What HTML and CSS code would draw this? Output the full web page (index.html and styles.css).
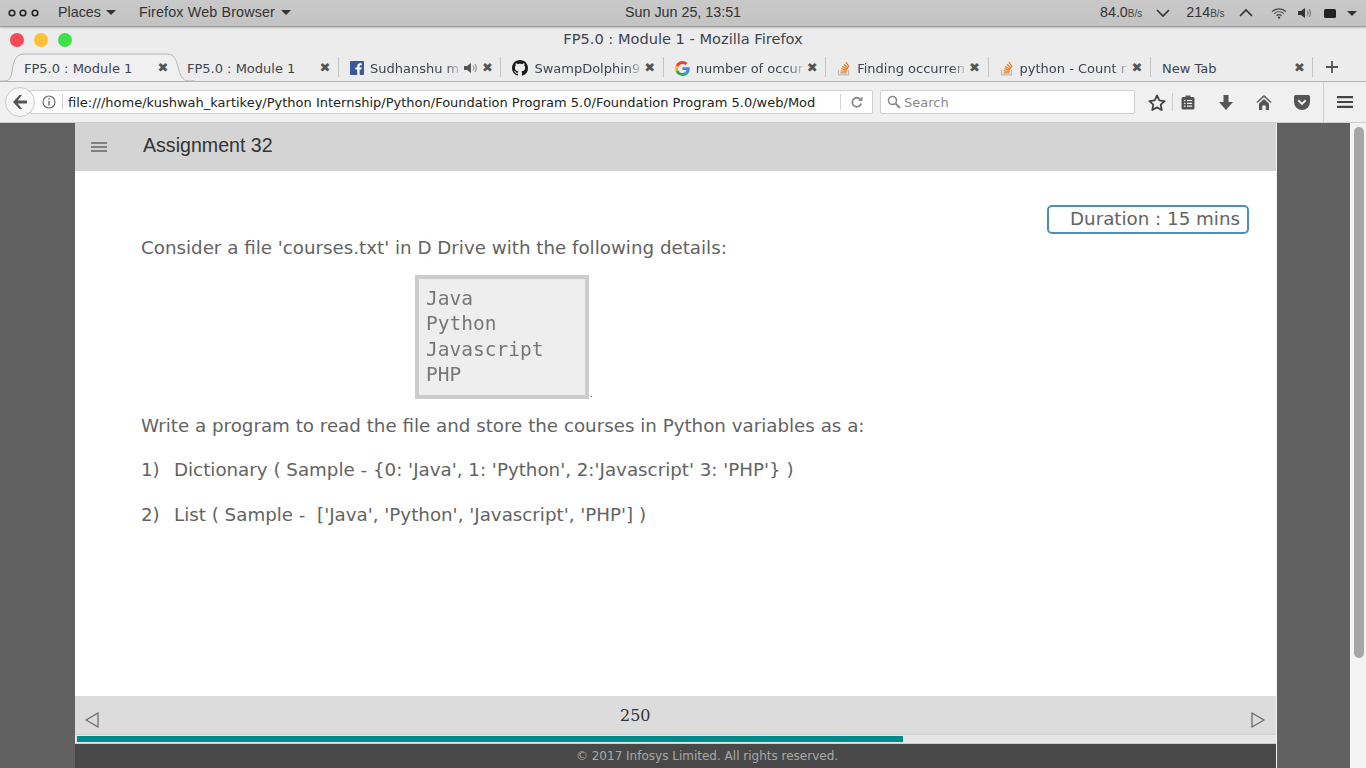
FILE: index.html
```html
<!DOCTYPE html>
<html lang="en">
<head>
    <meta charset="UTF-8">
    <title>FP5.0 : Module 1 - Mozilla Firefox</title>
    <link rel="stylesheet" href="styles.css">
</head>
<body>
    <div class="topbar">
        <div class="topbar-left">
            <svg class="dots" width="32" height="8" viewBox="0 0 32 8"><circle cx="4" cy="4" r="2.8"/><circle cx="15" cy="4" r="2.8"/><circle cx="27" cy="4" r="2.8"/></svg>
            <span class="menu-item places">Places <i class="caret"></i></span>
            <span class="menu-item browser">Firefox Web Browser <i class="caret"></i></span>
        </div>
        <div class="clock">Sun Jun 25, 13:51</div>
        <div class="topbar-right">
            <span class="speed">84.0<small>B/s</small></span>
            <svg class="tray-chev" width="16" height="10" viewBox="0 0 16 10"><path d="M2 2l6 6 6-6" fill="none" stroke="#333" stroke-width="1.6"/></svg>
            <span class="speed">214<small>B/s</small></span>
            <svg class="tray-chev" width="16" height="10" viewBox="0 0 16 10"><path d="M2 8l6-6 6 6" fill="none" stroke="#333" stroke-width="1.6"/></svg>
            <svg class="tray-wifi" width="16" height="12" viewBox="0 0 16 12"><path d="M1 4.500c4-3.600 10-3.600 14 0M3.200 6.600c2.800-2.500 6.800-2.500 9.600 0M5.400 8.700c1.500-1.300 3.700-1.300 5.200 0" fill="none" stroke="#444" stroke-width="1.200"/><circle cx="8" cy="10.600" r="1.200" fill="#444"/></svg>
            <svg class="tray-vol" width="13" height="12" viewBox="0 0 13 12"><path d="M0 4h3l4-3v10L3 8H0z" fill="#333"/><path d="M9 3.500c1.200 1.400 1.200 3.600 0 5M11 2c1.800 2.200 1.800 5.800 0 8" fill="none" stroke="#666"/></svg>
            <svg class="tray-batt" width="13" height="9" viewBox="0 0 13 9"><rect width="12" height="9" rx="1.500" fill="#222"/></svg>
            <i class="caret tray-caret"></i>
        </div>
    </div>

    <div class="titlebar">
        <div class="lights"><i class="light red"></i><i class="light yellow"></i><i class="light green"></i></div>
        <div class="window-title">FP5.0 : Module 1 - Mozilla Firefox</div>
    </div>

    <div class="tabstrip">
        <svg class="active-curve" width="196" height="29" viewBox="0 0 196 29"><path d="M0 28h4c5 0 7-3 8-9 1-9 3-18 12-18h143c7 0 9 5 11 13 2 8 4 14 11 14h6" fill="#f0f0f0" stroke="#b4b4b4"/></svg>
        <div class="tab tab-first"><span class="tab-label">FP5.0 : Module 1</span><b class="tab-close">✖</b></div>
        <div class="tab tab-second sep"><span class="tab-label">FP5.0 : Module 1</span><b class="tab-close">✖</b></div>
        <div class="tab sep">
            <svg class="fav" width="14" height="14" viewBox="0 0 14 14"><rect width="14" height="14" rx="1" fill="#3b5998"/><path d="M9.600 14V8.600h1.800l.3-2.100H9.600V5.200c0-.6.200-1 1-1h1.200V2.300c-.2 0-.9-.1-1.700-.1-1.700 0-2.800 1-2.800 2.900v1.400H5.400v2.100h1.900V14z" fill="#fff"/></svg>
            <span class="tab-label fade">Sudhanshu m</span>
            <svg class="tab-sound" width="13" height="12" viewBox="0 0 13 12"><path d="M0 4h3l4-3v10L3 8H0z" fill="#555"/><path d="M9 3.500c1.200 1.400 1.200 3.600 0 5M11 2c1.800 2.200 1.800 5.800 0 8" fill="none" stroke="#777"/></svg>
            <b class="tab-close">✖</b>
        </div>
        <div class="tab sep">
            <svg class="fav" width="16" height="16" viewBox="0 0 16 16"><path fill="#1b1b1b" d="M8 0C3.580 0 0 3.580 0 8c0 3.540 2.290 6.530 5.470 7.590.4.070.55-.17.55-.38 0-.19-.01-.82-.01-1.490-2.010.37-2.530-.49-2.690-.94-.09-.23-.48-.94-.82-1.130-.28-.15-.68-.52-.01-.53.630-.01 1.080.58 1.230.82.720 1.210 1.870.87 2.330.66.070-.52.280-.87.510-1.070-1.780-.2-3.640-.89-3.640-3.950 0-.87.310-1.590.820-2.150-.080-.2-.360-1.020.080-2.120 0 0 .670-.210 2.200.820.640-.180 1.320-.270 2-.270s1.360.090 2 .270c1.530-1.040 2.200-.820 2.200-.820.440 1.100.160 1.920.080 2.120.510.560.820 1.270.820 2.150 0 3.070-1.870 3.750-3.650 3.950.290.250.540.730.540 1.480 0 1.070-.010 1.930-.010 2.200 0 .210.150.460.550.380A8.010 8.010 0 0 0 16 8c0-4.420-3.580-8-8-8z"/></svg>
            <span class="tab-label fade">SwampDolphin9</span>
            <b class="tab-close">✖</b>
        </div>
        <div class="tab sep">
            <svg class="fav" width="15" height="15" viewBox="0 0 48 48"><path fill="#ea4335" d="M24 9.500c3.500 0 6.700 1.300 9.100 3.500l6.800-6.800C35.800 2.400 30.300 0 24 0 14.600 0 6.500 5.400 2.600 13.200l7.900 6.200C12.400 13.700 17.700 9.500 24 9.500z"/><path fill="#4285f4" d="M46.900 24.500c0-1.600-.1-3.100-.4-4.500H24v9h12.900c-.6 3-2.200 5.500-4.700 7.200l7.700 6C44.400 37.900 46.900 31.800 46.900 24.500z"/><path fill="#fbbc05" d="M10.500 28.600c-.5-1.400-.8-3-.8-4.600s.3-3.200.8-4.600l-7.900-6.200C.9 16.500 0 20.100 0 24s.9 7.500 2.600 10.800z"/><path fill="#34a853" d="M24 48c6.500 0 11.900-2.100 15.900-5.800l-7.700-6c-2.100 1.400-4.900 2.300-8.200 2.300-6.300 0-11.600-4.200-13.500-10l-7.900 6.200C6.500 42.600 14.600 48 24 48z"/></svg>
            <span class="tab-label fade">number of occur</span>
            <b class="tab-close">✖</b>
        </div>
        <div class="tab sep">
            <svg class="fav" width="14" height="16" viewBox="0 0 14 16"><path d="M1.500 10v4.800h10V10" fill="none" stroke="#bcbbbb" stroke-width="1.200"/><path d="M3.500 12.800h6M3.700 10.800l5.900.6M4.200 8.700l5.700 1.500M5.200 6.500l5.300 2.700M6.800 4.300l4.500 3.900M8.900 2.200l3.300 5" fill="none" stroke="#f48024" stroke-width="1.300"/></svg>
            <span class="tab-label fade">Finding occurren</span>
            <b class="tab-close">✖</b>
        </div>
        <div class="tab sep">
            <svg class="fav" width="14" height="16" viewBox="0 0 14 16"><path d="M1.500 10v4.800h10V10" fill="none" stroke="#bcbbbb" stroke-width="1.200"/><path d="M3.500 12.800h6M3.700 10.800l5.900.6M4.200 8.700l5.700 1.500M5.200 6.500l5.300 2.700M6.800 4.300l4.500 3.900M8.900 2.200l3.300 5" fill="none" stroke="#f48024" stroke-width="1.300"/></svg>
            <span class="tab-label fade">python - Count r</span>
            <b class="tab-close">✖</b>
        </div>
        <div class="tab sep"><span class="tab-label">New Tab</span><b class="tab-close">✖</b></div>
        <div class="tab-new">
            <svg width="12" height="12" viewBox="0 0 12 12"><path d="M6 0v12M0 6h12" stroke="#555" stroke-width="1.800"/></svg>
        </div>
    </div>

    <div class="navbar">
        <div class="back-btn">
            <svg width="16" height="14" viewBox="0 0 16 14"><path d="M7.500 0L1 7l6.500 7h2.500L5.800 8.600H15V5.400H5.800L10 0z" fill="#555"/></svg>
        </div>
        <div class="urlbar">
            <svg class="info" width="14" height="14" viewBox="0 0 14 14"><circle cx="7" cy="7" r="6" fill="none" stroke="#666" stroke-width="1.100"/><path d="M7 6v4.500M7 3.300v1.400" stroke="#666" stroke-width="1.400"/></svg>
            <span class="url-text">file:///home/kushwah_kartikey/Python Internship/Python/Foundation Program 5.0/Foundation Program 5.0/web/Mod</span>
            <span class="reload">
                <svg width="12" height="12" viewBox="0 0 12 12"><path d="M10.200 7.500A4.500 4.500 0 1 1 9 3" fill="none" stroke="#8b8b8b" stroke-width="1.800"/><path d="M6.800 4.800L11.500 5V.5z" fill="#8b8b8b"/></svg>
            </span>
        </div>
        <div class="searchbar">
            <svg width="14" height="14" viewBox="0 0 14 14"><circle cx="5.500" cy="5.500" r="4" fill="none" stroke="#8a8a8a" stroke-width="1.600"/><path d="M8.500 8.500l4.500 4.500" stroke="#8a8a8a" stroke-width="2"/></svg>
            <span>Search</span>
        </div>
        <div class="tools">
            <svg class="tool-star" width="18" height="17" viewBox="0 0 18 17"><path d="M9 1.500l2.300 4.900 5.300.7-3.900 3.600 1 5.300L9 13.400 4.300 16l1-5.300L1.400 7.100l5.300-.7z" fill="none" stroke="#444" stroke-width="1.800" stroke-linejoin="round"/></svg>
            <i class="tool-sep"></i>
            <svg class="tool-clip" width="14" height="16" viewBox="0 0 14 16"><path d="M2 3h2.500V1.500h5V3H12a1.500 1.500 0 0 1 1.500 1.500v9.500A1.500 1.500 0 0 1 12 15.500H2A1.500 1.500 0 0 1 .5 14V4.500A1.500 1.500 0 0 1 2 3z" fill="#555"/><path d="M3 6.500h1.500M6 6.500h5M3 9.300h1.500M6 9.300h5M3 12.100h1.500M6 12.100h5" stroke="#efefef" stroke-width="1.200"/></svg>
            <svg class="tool-down" width="14" height="15" viewBox="0 0 14 15"><path d="M4.500 0h5v7H14l-7 8-7-8h4.500z" fill="#555"/></svg>
            <svg class="tool-home" width="16" height="15" viewBox="0 0 16 15"><path d="M8 0L0 7.500h2L8 2l6 5.500h2z" fill="#555"/><path d="M3 8.500L8 4l5 4.500V15H9.800v-4.500H6.200V15H3z" fill="#555"/></svg>
            <svg class="tool-pocket" width="16" height="15" viewBox="0 0 16 15"><path d="M1.500 0h13A1.500 1.500 0 0 1 16 1.500V7a8 8 0 0 1-16 0V1.500A1.500 1.500 0 0 1 1.500 0z" fill="#555"/><path d="M4.300 5.300L8 8.900l3.700-3.600" fill="none" stroke="#efefef" stroke-width="2"/></svg>
            <i class="tool-sep tool-sep-tall"></i>
            <svg class="tool-menu" width="16" height="12" viewBox="0 0 16 12"><path d="M0 1.200h16M0 6h16M0 10.800h16" stroke="#444" stroke-width="2.200"/></svg>
        </div>
    </div>

    <div class="viewport">
        <div class="gutter gutter-left"></div>
        <div class="slide">
            <div class="slide-header">
                <svg class="hamburger" width="16" height="10" viewBox="0 0 16 10"><path d="M0 1h16M0 5h16M0 9h16" stroke="#666" stroke-width="1.500"/></svg>
                <h1>Assignment 32</h1>
            </div>
            <div class="slide-body">
                <div class="duration-row"><div class="duration">Duration : 15 mins</div></div>
                <p class="line-first">Consider a file 'courses.txt' in D Drive with the following details:</p>
                <div class="figure">
                    <div class="codebox">Java
Python
Javascript
PHP</div><span class="figure-dot">.</span>
                </div>
                <p class="line-write">Write a program to read the file and store the courses in Python variables as a:</p>
                <p class="line-item"><span class="num">1)</span>Dictionary ( Sample - {0: 'Java', 1: 'Python', 2:'Javascript' 3: 'PHP'} )</p>
                <p class="line-item"><span class="num">2)</span>List ( Sample -&nbsp; ['Java', 'Python', 'Javascript', 'PHP'] )</p>
            </div>
            <div class="pager">
                <svg width="14" height="16" viewBox="0 0 14 16"><path d="M1 8l12-7v14z" fill="none" stroke="#666" stroke-width="1.200"/></svg>
                <span class="page-no">250</span>
                <svg width="14" height="16" viewBox="0 0 14 16"><path d="M13 8L1 1v14z" fill="none" stroke="#666" stroke-width="1.200"/></svg>
            </div>
            <div class="progress"><div class="progress-fill" style="width: 69%"></div></div>
            <div class="copyright">© 2017 Infosys Limited. All rights reserved.</div>
        </div>
        <div class="gutter gutter-right"></div>
        <div class="scrollbar"><div class="thumb"></div></div>
    </div>
</body>
</html>
```

FILE: styles.css
```css
* {
    box-sizing: border-box;
}
html, body {
    margin: 0;
    height: 100%;
    overflow: hidden;
}
body {
    width: 1366px;
    height: 768px;
    display: flex;
    flex-direction: column;
    font-family: "DejaVu Sans", sans-serif;
    background: #ececec;
}

/* gnome top bar */
.topbar {
    height: 27px;
    flex: none;
    display: flex;
    align-items: center;
    position: relative;
    background: linear-gradient(#c9c9c9, #c3c3c3);
    border-bottom: 1px solid #9c9c9c;
    box-shadow: 0 1px 2px rgba(0,0,0,0.2);
    font-family: "Liberation Sans", sans-serif;
    font-size: 14.300px;
    color: #333;
    z-index: 2;
}
.topbar-left {
    display: flex;
    align-items: center;
    padding-left: 8px;
    width: 625px;
}
.dots circle {
    fill: none;
    stroke: #222;
    stroke-width: 1.6;
}
.menu-item {
    margin: -2px 0 0 18px;
    white-space: nowrap;
}
.places {
    margin-right: 5px;
}
.places .caret {
    margin-left: 1px;
}
.browser {
    letter-spacing: 0.15px;
}
.browser .caret {
    margin-left: 2px;
}
.caret {
    display: inline-block;
    width: 0;
    height: 0;
    vertical-align: 2px;
    border-left: 5px solid transparent;
    border-right: 5px solid transparent;
    border-top: 5px solid #333;
}
.clock {
    width: 475px;
    margin-top: -2px;
}
.topbar-right {
    display: flex;
    align-items: center;
}
.speed {
    margin-top: -2px;
    white-space: nowrap;
}
.speed small {
    font-size: 10px;
    color: #444;
}
.tray-chev {
    margin: 0 15px 0 13px;
}
.tray-wifi {
    margin-left: 2px;
}
.tray-vol {
    margin-left: 11px;
}
.tray-batt {
    margin-left: 13px;
}
.tray-caret {
    margin-left: 10px;
    vertical-align: 0;
}

/* window title */
.titlebar {
    height: 26px;
    flex: none;
    display: flex;
    align-items: center;
    position: relative;
    background: #ececec;
}
.lights {
    display: flex;
    gap: 10px;
    padding-left: 10px;
}
.light {
    width: 14px;
    height: 14px;
    border-radius: 50%;
}
.red { background: #f8485a; }
.yellow { background: #fdc132; }
.green { background: #3ee149; }
.window-title {
    position: absolute;
    left: 0;
    right: 0;
    top: 3px;
    text-align: center;
    font-size: 14.600px;
    color: #3c4450;
}

/* tabs */
.tabstrip {
    height: 29px;
    flex: none;
    display: flex;
    position: relative;
    background: #ececec;
    border-bottom: 1px solid #b4b4b4;
    padding-left: 18px;
    font-size: 13px;
    color: #3c4450;
}
.active-curve {
    position: absolute;
    left: 0;
    top: 0;
}
.tab {
    width: 162.400px;
    height: 28px;
    display: flex;
    align-items: center;
    padding: 2px 6px 0 11px;
    position: relative;
}
.tab.sep::after {
    content: "";
    position: absolute;
    right: 0;
    top: 4px;
    height: 20px;
    width: 1px;
    background: #c4c4c4;
}
.tab-first {
    width: 163px;
    padding-left: 6px;
    padding-right: 10px;
}
.tab-second {
    width: 158px;
    padding-left: 6px;
}
.tab-label {
    flex: 1;
    overflow: hidden;
    white-space: nowrap;
}
.fade {
    -webkit-mask-image: linear-gradient(to left, transparent 0, #000 18px);
    mask-image: linear-gradient(to left, transparent 0, #000 18px);
}
.fav {
    flex: none;
    margin-right: 6px;
}
.tab-sound {
    flex: none;
    margin: 0 4px 0 1px;
}
.tab-close {
    flex: none;
    width: 12px;
    margin-right: 2px;
    font-size: 13px;
    font-weight: 400;
    line-height: 16px;
    text-align: center;
    color: #555;
}
.tab-new {
    width: 37px;
    display: flex;
    align-items: center;
    padding-left: 13px;
}

/* nav bar */
.navbar {
    height: 41px;
    flex: none;
    display: flex;
    align-items: center;
    position: relative;
    background: #f0f0f0;
    border-bottom: 1px solid #cfcfcf;
    padding-left: 5px;
}
.back-btn {
    width: 30px;
    height: 30px;
    flex: none;
    border-radius: 50%;
    background: #f8f8f8;
    border: 1px solid #c8c8c8;
    display: flex;
    align-items: center;
    justify-content: center;
    position: relative;
    z-index: 1;
}
.urlbar {
    width: 843px;
    height: 24px;
    margin-left: -5px;
    flex: none;
    display: flex;
    align-items: center;
    background: #fff;
    border: 1px solid #cfcfcf;
    border-radius: 0 2px 2px 0;
    padding-left: 11px;
}
.info {
    flex: none;
}
.url-text {
    width: 778px;
    height: 16px;
    flex: none;
    margin-left: 6px;
    padding-left: 5px;
    border-left: 1px solid #cfcfcf;
    white-space: nowrap;
    overflow: hidden;
    font-size: 13px;
    line-height: 18px;
    color: #222;
}
.reload {
    display: flex;
    align-items: center;
    height: 16px;
    padding-left: 10px;
    border-left: 1px solid #d5d5d5;
}
.searchbar {
    width: 255px;
    height: 24px;
    flex: none;
    margin-left: 7px;
    display: flex;
    align-items: center;
    gap: 3px;
    padding-left: 6px;
    background: #fff;
    border: 1px solid #cfcfcf;
    border-radius: 2px;
    font-size: 13px;
    color: #8a8a8a;
}
.tools {
    display: flex;
    align-items: center;
    padding-left: 13px;
}
.tool-sep {
    width: 1px;
    height: 18px;
    margin-left: 6px;
    background: #cfcfcf;
}
.tool-clip {
    margin-left: 8px;
}
.tool-down {
    margin-left: 24px;
}
.tool-home {
    margin-left: 23px;
}
.tool-pocket {
    margin-left: 22px;
}
.tool-sep-tall {
    height: 40px;
    margin-left: 13px;
}
.tool-menu {
    margin-left: 13px;
}

/* page */
.viewport {
    flex: 1;
    min-height: 0;
    display: flex;
}
.gutter {
    flex: none;
    background: #616161;
}
.gutter-left {
    width: 75px;
}
.gutter-right {
    width: 74px;
    border-left: 1px solid #f2f2f2;
}
.slide {
    width: 1201px;
    flex: none;
    display: flex;
    flex-direction: column;
    background: #fff;
}
.slide-header {
    height: 48px;
    flex: none;
    display: flex;
    align-items: center;
    padding-left: 16px;
    background: #d4d4d4;
}
.hamburger {
    flex: none;
}
h1 {
    margin: 0 0 3px 36px;
    font-family: "Liberation Sans", sans-serif;
    font-size: 19.600px;
    font-weight: 400;
    color: #333;
}
.slide-body {
    flex: 1;
    min-height: 0;
    padding: 34px 27px 0 66px;
    font-size: 18.250px;
    color: #636363;
}
.duration-row {
    display: flex;
    justify-content: flex-end;
    height: 29px;
}
.duration {
    width: 202px;
    height: 29px;
    padding-right: 7px;
    text-align: right;
    line-height: 24px;
    border: 2px solid #4a8fbc;
    border-radius: 5px;
}
.slide-body p {
    margin: 0;
    line-height: 24px;
    white-space: nowrap;
}
.slide-body .line-first {
    margin-top: 2px;
}
.figure {
    display: flex;
    align-items: flex-end;
    margin: 15px 0 15px 274px;
}
.codebox {
    width: 174px;
    height: 124px;
    padding: 7px 0 0 7px;
    background: #eee;
    border: 4px solid #ccc;
    font-family: "DejaVu Sans Mono", monospace;
    font-size: 19.500px;
    line-height: 25.300px;
    color: #777;
    white-space: pre;
    filter: blur(0.5px);
}
.figure-dot {
    font-size: 8px;
    line-height: 8px;
    margin-left: 1px;
    color: #335;
}
.slide-body .line-item {
    margin-top: 20px;
}
.slide-body .line-item + .line-item {
    margin-top: 21px;
}
.num {
    display: inline-block;
    width: 33px;
}
.pager {
    height: 38px;
    flex: none;
    display: flex;
    align-items: center;
    justify-content: space-between;
    padding: 9px 11px 0 10px;
    background: #dcdcdc;
    position: relative;
}
.page-no {
    position: absolute;
    left: 545px;
    top: 10px;
    font-family: "DejaVu Serif", serif;
    font-size: 16px;
    color: #333;
}
.progress {
    height: 10px;
    flex: none;
    padding: 1px 2px;
    background: #e6e6e6;
    border-top: 1px solid #cfcfcf;
    border-bottom: 1px solid #cfcfcf;
}
.progress-fill {
    height: 100%;
    background: #008b8b;
}
.copyright {
    height: 24px;
    flex: none;
    display: flex;
    align-items: center;
    justify-content: center;
    padding-left: 63px;
    background: #484848;
    font-size: 12px;
    color: #a8a8a8;
}
.scrollbar {
    width: 16px;
    flex: none;
    padding: 4px 2px 0 4px;
    background: #f3f3f3;
}
.thumb {
    height: 531px;
    border-radius: 5px;
    background: #a6a6a6;
}
```
